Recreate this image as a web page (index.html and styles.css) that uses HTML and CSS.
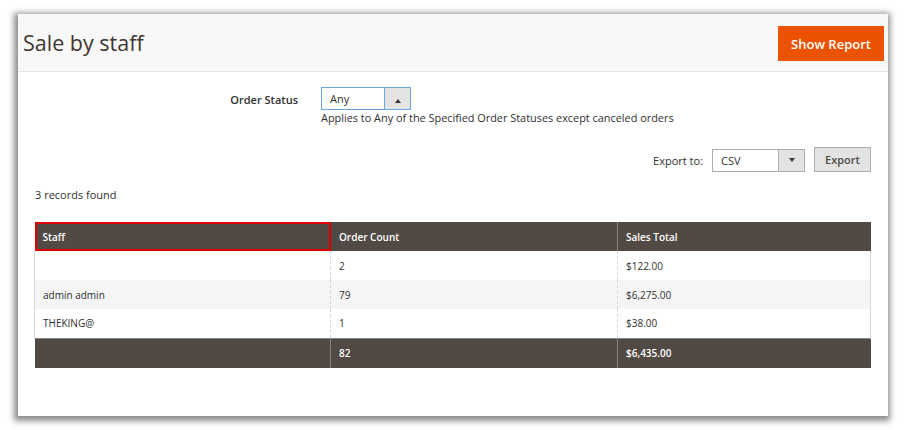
FILE: index.html
```html
<!DOCTYPE html>
<html>
<head>
<meta charset="utf-8">
<link rel="stylesheet" href="styles.css">
</head>
<body>
<div class="card">
  <header class="page-head">
    <h1 class="title">Sale by staff</h1>
    <button class="btn-primary">Show Report</button>
  </header>
  <div class="content">
    <div class="field-row">
      <label class="field-label">Order Status</label>
      <div class="field-control">
        <div class="select select-focus">
          <span class="select-value">Any</span>
          <span class="select-arrow"><span class="tri-up"></span></span>
        </div>
        <div class="field-note">Applies to Any of the Specified Order Statuses except canceled orders</div>
      </div>
    </div>
    <div class="export-row">
      <span class="export-label">Export to:</span>
      <div class="select select-export">
        <span class="select-value">CSV</span>
        <span class="select-arrow"><span class="tri-down"></span></span>
      </div>
      <button class="btn-secondary">Export</button>
    </div>
    <div class="records">3 records found</div>
    <table class="grid">
      <thead>
        <tr>
          <th class="col-staff highlighted">Staff</th>
          <th class="col-count">Order Count</th>
          <th>Sales Total</th>
        </tr>
      </thead>
      <tbody>
        <tr><td></td><td>2</td><td>$122.00</td></tr>
        <tr class="alt"><td>admin admin</td><td>79</td><td>$6,275.00</td></tr>
        <tr><td>THEKING@</td><td>1</td><td>$38.00</td></tr>
      </tbody>
      <tfoot>
        <tr><td></td><td>82</td><td>$6,435.00</td></tr>
      </tfoot>
    </table>
  </div>
</div>
</body>
</html>
```

FILE: styles.css
```css
html, body {
  margin: 0;
  padding: 0;
  background: #ffffff;
}
body {
  font-family: "Open Sans", "Liberation Sans", sans-serif;
  color: #303030;
  width: 907px;
  height: 430px;
  overflow: hidden;
}
.card {
  margin: 14px 0 0 18px;
  width: 870px;
  height: 402px;
  background: #ffffff;
  box-shadow: -1px 2px 6px 3px rgba(0, 0, 0, 0.45);
}
.page-head {
  height: 57px;
  background: #f8f8f8;
  border-bottom: 1px solid #e3e3e3;
  display: flex;
  align-items: flex-start;
  justify-content: space-between;
  padding: 0 4px 0 5px;
}
.title {
  margin: 14px 0 0;
  font-size: 21.5px;
  font-weight: 400;
  color: #41362f;
  line-height: 30px;
}
.btn-primary {
  margin-top: 12px;
  width: 106px;
  height: 35px;
  background: #eb5202;
  border: 1px solid #eb5202;
  color: #ffffff;
  font-family: "Open Sans", "Liberation Sans", sans-serif;
  font-weight: 600;
  font-size: 13px;
  padding: 0;
}
.content {
  padding: 15px 17px 0 17px;
}
.field-row {
  display: grid;
  grid-template-columns: 263px auto;
  column-gap: 23px;
}
.field-label {
  text-align: right;
  font-size: 11px;
  font-weight: 600;
  color: #303030;
  line-height: 23px;
  padding-top: 1px;
}
.select {
  display: flex;
  height: 23px;
  box-sizing: border-box;
  border: 1px solid #adadad;
  background: #ffffff;
  font-size: 11px;
}
.select-focus {
  width: 90px;
  border-color: #68a8e0;
}
.select-value {
  flex: 1;
  padding-left: 8px;
  line-height: 21px;
  color: #303030;
}
.select-arrow {
  width: 25px;
  background: #e3e3e3;
  border-left: 1px solid #adadad;
  display: flex;
  align-items: center;
  justify-content: center;
}
.select-focus .select-arrow {
  border-left-color: #68a8e0;
}
.tri-up {
  width: 0;
  height: 0;
  border-left: 3px solid transparent;
  border-right: 3px solid transparent;
  border-bottom: 4px solid #41362f;
  margin-top: 5px;
}
.tri-down {
  width: 0;
  height: 0;
  border-left: 3px solid transparent;
  border-right: 3px solid transparent;
  border-top: 4px solid #41362f;
}
.field-note {
  font-size: 10.9px;
  line-height: 16px;
  color: #303030;
  margin-top: 0;
}
.export-row {
  display: flex;
  justify-content: flex-end;
  align-items: center;
  margin-top: 22px;
  gap: 9px;
}
.export-label {
  font-size: 11px;
  color: #303030;
}
.select-export {
  width: 93px;
}
.btn-secondary {
  width: 57px;
  height: 25px;
  background: #e3e3e3;
  border: 1px solid #adadad;
  font-family: "Open Sans", "Liberation Sans", sans-serif;
  font-weight: 600;
  font-size: 11px;
  color: #514943;
  padding: 0;
  margin-top: -1px;
}
.records {
  font-size: 11px;
  margin-top: 14px;
  line-height: 18px;
  color: #303030;
}
.grid {
  margin-top: 18px;
  margin-left: -1px;
  width: 837px;
  border-collapse: collapse;
  font-size: 10px;
}
.grid th, .grid td {
  text-align: left;
  padding: 0 8px;
  height: 29px;
  box-sizing: border-box;
}
.grid th {
  background: #514943;
  color: #ffffff;
  font-weight: 600;
  border-left: 1px solid #8a837f;
  height: 29px;
}
.grid th:first-child {
  border-left: none;
}
.col-staff { width: 296px; }
.col-count { width: 287px; }
.highlighted {
  outline: 2px solid #e10000;
  outline-offset: -2px;
}
.grid tbody td {
  border-left: 1px dashed #d6d6d6;
  color: #303030;
}
.grid tbody td:first-child {
  border-left: 1px solid #d6d6d6;
}
.grid tbody td:last-child {
  border-right: 1px solid #d6d6d6;
}
.grid tbody tr.alt td {
  background: #f5f5f5;
}
.grid tfoot td {
  background: #514943;
  color: #ffffff;
  font-weight: 600;
  border-left: 1px solid #8a837f;
  border-top: 1px solid #8a837f;
  height: 30px;
}
.grid tfoot td:first-child {
  border-left: none;
}
```
